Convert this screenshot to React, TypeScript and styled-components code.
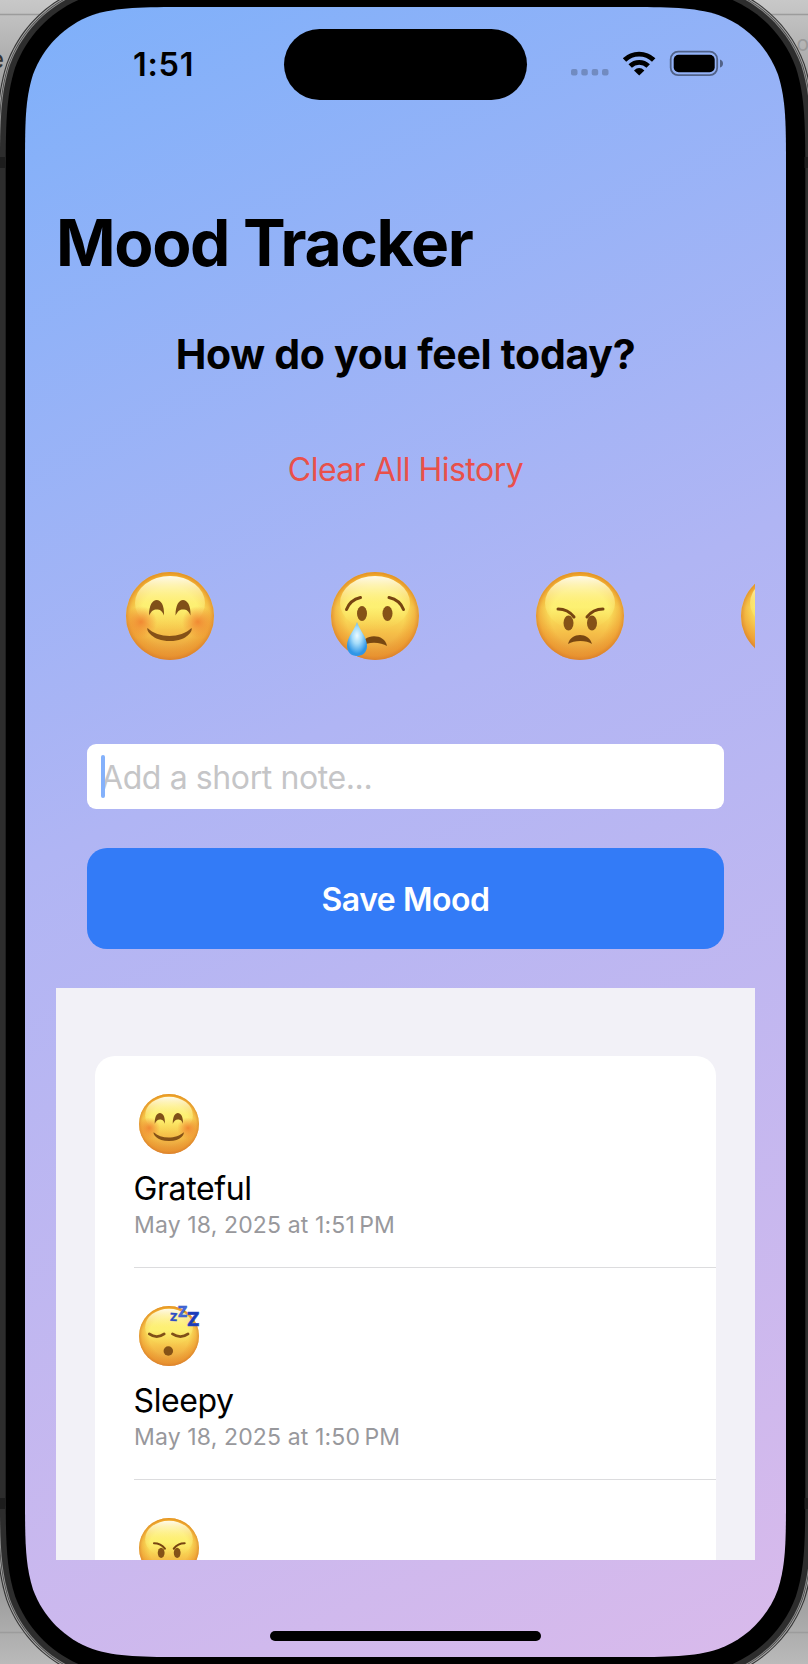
import React from "react";
import styled, { createGlobalStyle } from "styled-components";

const GlobalStyle = createGlobalStyle`
  * { box-sizing: border-box; }
  html, body { margin: 0; padding: 0; }
  body {
    width: 808px;
    height: 1664px;
    overflow: hidden;
    background: #b4b4b4;
    font-family: Inter, "Liberation Sans", sans-serif;
    color: #000;
  }
  button, input { font-family: inherit; border: 0; margin: 0; padding: 0; }
`;

/* Rounded rectangle with continuous corners. */
function squircle(x: number, y: number, w: number, h: number, r: number) {
  const R = x + w;
  const B = y + h;
  const a = 1.528665 * r;
  const b = 1.088493 * r;
  const c = 0.868407 * r;
  const d = 0.631494 * r;
  const e = 0.372824 * r;
  const f = 0.16906 * r;
  const g = 0.074911 * r;
  return [
    `M${x + a} ${y}`,
    `L${R - a} ${y}`,
    `C${R - b} ${y} ${R - c} ${y} ${R - d} ${y + g}`,
    `C${R - e} ${y + f} ${R - f} ${y + e} ${R - g} ${y + d}`,
    `C${R} ${y + c} ${R} ${y + b} ${R} ${y + a}`,
    `L${R} ${B - a}`,
    `C${R} ${B - b} ${R} ${B - c} ${R - g} ${B - d}`,
    `C${R - f} ${B - e} ${R - e} ${B - f} ${R - d} ${B - g}`,
    `C${R - c} ${B} ${R - b} ${B} ${R - a} ${B}`,
    `L${x + a} ${B}`,
    `C${x + b} ${B} ${x + c} ${B} ${x + d} ${B - g}`,
    `C${x + e} ${B - f} ${x + f} ${B - e} ${x + g} ${B - d}`,
    `C${x} ${B - c} ${x} ${B - b} ${x} ${B - a}`,
    `L${x} ${y + a}`,
    `C${x} ${y + b} ${x} ${y + c} ${x + g} ${y + d}`,
    `C${x + f} ${y + e} ${x + e} ${y + f} ${x + d} ${y + g}`,
    `C${x + c} ${y} ${x + b} ${y} ${x + a} ${y}Z`,
  ].join(" ");
}

const Stage = styled.div`
  position: relative;
  width: 808px;
  height: 1664px;
  overflow: hidden;
  padding: 7px 22px 7px 25px;
`;

const FrameArt = styled.svg`
  position: absolute;
  inset: 0;
`;

const Screen = styled.main`
  position: relative;
  width: 761px;
  height: 1650px;
  display: flex;
  flex-direction: column;
  background: linear-gradient(155.2deg, #7eb0fa 0%, #b0b5f4 43%, #d9baeb 100%);
  clip-path: path("${squircle(0, 0, 761, 1650, 107)}");
`;

const StatusBar = styled.header`
  display: flex;
  align-items: flex-start;
  height: 197px;
  padding: 21.5px 63px 0 108px;
`;

const Clock = styled.div`
  width: 151px;
  padding-top: 18px;
  font-size: 32.5px;
  line-height: 36px;
  font-weight: 600;
  letter-spacing: 0.7px;
`;

const Island = styled.div`
  width: 243px;
  height: 71.5px;
  border-radius: 36px;
  background: #000;
`;

const StatusIcons = styled.svg`
  margin: 20.5px 0 0 auto;
`;

const Content = styled.div`
  width: 699px;
  margin-left: 31px;
  display: flex;
  flex-direction: column;
`;

const Title = styled.h1`
  margin: 0;
  height: 78px;
  font-size: 64px;
  line-height: 77px;
  font-weight: 700;
  letter-spacing: -1.35px;
  white-space: nowrap;
`;

const Question = styled.h2`
  margin: 47px 0 0;
  text-align: center;
  font-size: 41px;
  line-height: 50px;
  font-weight: 700;
  letter-spacing: -0.3px;
  white-space: nowrap;
`;

const ClearButton = styled.button`
  align-self: center;
  margin-top: 71px;
  background: none;
  color: #e9504a;
  font-size: 32px;
  line-height: 40px;
  letter-spacing: -0.5px;
  white-space: nowrap;
`;

const MoodStrip = styled.div`
  display: flex;
  gap: 117px;
  margin-top: 82px;
  padding-left: 70px;
  height: 102px;
  overflow: hidden;
`;

const Face = styled.svg<{ $size: number }>`
  width: ${(p) => p.$size}px;
  height: ${(p) => p.$size}px;
  flex: none;
  display: block;
  overflow: visible;
`;

const NoteField = styled.label`
  position: relative;
  display: flex;
  align-items: center;
  margin: 70px 31px 0;
  height: 65px;
  padding: 2px 0 0 14px;
  border-radius: 9px;
  background: #fff;
`;

const NoteInput = styled.input`
  width: 600px;
  height: 50px;
  background: transparent;
  outline: 0;
  font-size: 32px;
  letter-spacing: -0.4px;
  &::placeholder { color: #c5c5c7; opacity: 1; }
`;

const Caret = styled.span`
  position: absolute;
  left: 13.5px;
  top: 11px;
  width: 4px;
  height: 43px;
  border-radius: 2px;
  background: #84b1fb;
`;

const SaveButton = styled.button`
  margin: 39px 31px 0;
  height: 101px;
  padding-top: 2px;
  border-radius: 20px;
  background: #337bf7;
  color: #fff;
  font-size: 32px;
  font-weight: 600;
  letter-spacing: -0.45px;
`;

const History = styled.section`
  margin-top: 39px;
  height: 572px;
  padding: 68px 39px 0;
  background: #f2f1f7;
  overflow: hidden;
`;

const Card = styled.ul`
  margin: 0;
  padding: 0 0 0 39px;
  list-style: none;
  height: 700px;
  border-radius: 20px;
  background: #fff;
`;

const Entry = styled.li`
  display: flex;
  flex-direction: column;
  align-items: flex-start;
  height: 212px;
  padding-top: 38px;
  border-bottom: 1px solid #dcdcde;
  white-space: nowrap;
`;

const EntryFace = styled.div`
  height: 60px;
  margin-left: 5px;
`;

const Note = styled.div`
  margin: 14.5px 0 0 -0.5px;
  font-size: 32px;
  line-height: 40px;
  letter-spacing: -0.4px;
`;

const Stamp = styled.time`
  margin-top: 2.5px;
  color: #98989c;
  font-size: 23px;
  line-height: 28px;
  letter-spacing: 0.14px;
`;

const HomeBar = styled.div`
  width: 271px;
  height: 10px;
  margin: 71px 0 0 245px;
  border-radius: 5px;
  background: #000;
`;

type Mood = "happy" | "sad" | "angry" | "sleepy" | "calm";

function MoodFace({ mood, size }: { mood: Mood; size: number }) {
  return (
    <Face $size={size} viewBox="0 0 88 88" role="img" aria-label={mood}>
      <circle cx="44" cy="44" r="44" fill="url(#faceBase)" />
      <circle cx="44" cy="44" r="44" fill="url(#faceRim)" />
      <ellipse cx="44" cy="31" rx="35" ry="27" fill="url(#faceShine)" />
      {mood === "happy" && (
        <>
          <circle cx="15" cy="50" r="16" fill="url(#blush)" />
          <circle cx="72" cy="50" r="16" fill="url(#blush)" />
          <path d="M23 43.500C23 33 26.500 28 30.700 28S38.500 33 38 43.500C36 38.500 34 37.500 30.700 37.500S25.500 39 23 43.500Z" fill="#805018" />
          <path d="M49.500 43.500C49.500 33 53 28 57 28S65 33 64.500 43.500C62.500 38.500 60.500 37.500 57 37.500S52 39 49.500 43.500Z" fill="#805018" />
          <path d="M21.500 56C32 66.500 55 66.500 65.500 56C67 58 62 69 44 69S20 58 21.500 56Z" fill="#855117" />
        </>
      )}
      {mood === "sad" && (
        <>
          <ellipse cx="31" cy="41.500" rx="5" ry="7.500" fill="#855217" />
          <ellipse cx="56.500" cy="41.500" rx="5" ry="7.500" fill="#855217" />
          <path d="M15.500 37.500Q19 28 29.500 25.500M58 25.500Q69 28 72.500 37.500" fill="none" stroke="#774411" strokeWidth="3" strokeLinecap="round" />
          <path d="M30 75C31 61 54 61 56 74C50 70 36 69 30 75Z" fill="#784711" />
          <path d="M26 50C29 59 36 65 36 74C36 80 32 84 26 84S16 80 16 74C16 65 23 59 26 50Z" fill="url(#tear)" />
        </>
      )}
      {mood === "angry" && (
        <>
          <ellipse cx="32.500" cy="51" rx="5" ry="7.500" fill="#855217" />
          <ellipse cx="56" cy="51" rx="5" ry="7.500" fill="#855217" />
          <path d="M22 37Q32 37 38 45M67 37Q57 37 51 45" fill="none" stroke="#774411" strokeWidth="3" strokeLinecap="round" />
          <path d="M32 72C35 60 53 60 56 72C51 68 38 68 32 72Z" fill="#784711" />
        </>
      )}
      {mood === "calm" && (
        <>
          <ellipse cx="31" cy="37" rx="5" ry="7.500" fill="#855217" />
          <ellipse cx="57" cy="37" rx="5" ry="7.500" fill="#855217" />
          <path d="M28 62H60" stroke="#784711" strokeWidth="4" strokeLinecap="round" />
        </>
      )}
      {mood === "sleepy" && (
        <>
          <path d="M15 41Q26 49 37 41M49 41Q61 49 72 41" fill="none" stroke="#805018" strokeWidth="4" strokeLinecap="round" />
          <circle cx="43" cy="66" r="7" fill="#855217" />
          <g fill="#2b4cc4" fontFamily="Inter, sans-serif" fontWeight="800" stroke="#2b4cc4" strokeWidth="0.600">
            <text x="45.500" y="22" fontSize="16" transform="rotate(3 50 16)">Z</text>
            <text x="57" y="16" fontSize="21" fill="#486bd8">Z</text>
            <text x="70" y="29" fontSize="28" fill="#1c3db8">Z</text>
          </g>
        </>
      )}
    </Face>
  );
}

function FaceDefs() {
  return (
    <defs>
      <linearGradient id="faceBase" x1="0" y1="0" x2="0" y2="1">
        <stop offset="0" stopColor="#fbcb25" />
        <stop offset="0.400" stopColor="#fced64" />
        <stop offset="0.700" stopColor="#f5be48" />
        <stop offset="1" stopColor="#e49438" />
      </linearGradient>
      <radialGradient id="faceRim" cx="0.500" cy="0.500" r="0.500">
        <stop offset="0.660" stopColor="#ea8c26" stopOpacity="0" />
        <stop offset="0.900" stopColor="#ea8c26" stopOpacity="0.480" />
        <stop offset="1" stopColor="#d87a28" stopOpacity="0.750" />
      </radialGradient>
      <linearGradient id="faceShine" x1="0" y1="0" x2="0" y2="1">
        <stop offset="0" stopColor="#fffff4" stopOpacity="0.950" />
        <stop offset="0.500" stopColor="#fff78c" stopOpacity="0.500" />
        <stop offset="1" stopColor="#fced64" stopOpacity="0" />
      </linearGradient>
      <radialGradient id="blush">
        <stop offset="0" stopColor="#f0812f" stopOpacity="0.900" />
        <stop offset="1" stopColor="#f0812f" stopOpacity="0" />
      </radialGradient>
      <radialGradient id="tear" cx="0.500" cy="0.400" r="0.600">
        <stop offset="0" stopColor="#eafaff" />
        <stop offset="0.400" stopColor="#a5dcfa" />
        <stop offset="0.900" stopColor="#2f96e6" />
      </radialGradient>
      <linearGradient id="wall" x1="0" y1="0" x2="0" y2="1">
        <stop offset="0" stopColor="#c8c8c8" />
        <stop offset="0.060" stopColor="#9c9c9c" />
        <stop offset="0.930" stopColor="#8a8a8a" />
        <stop offset="1" stopColor="#bababa" />
      </linearGradient>
    </defs>
  );
}

const layers = [
  { out: 28.9, fill: "#333" },
  { out: 27.8, fill: "#a2a2a2" },
  { out: 26.7, fill: "#3a3a3a" },
  { out: 26.1, fill: "#8d8d8d" },
  { out: 25.1, fill: "#2d2d2d" },
  { out: 19.3, fill: "#000" },
];

const entries: { mood: Mood; note?: string; stamp?: string }[] = [
  { mood: "happy", note: "Grateful", stamp: "May 18, 2025 at 1:51\u202fPM" },
  { mood: "sleepy", note: "Sleepy", stamp: "May 18, 2025 at 1:50\u202fPM" },
  { mood: "angry" },
];

export default function App() {
  return (
    <>
      <GlobalStyle />
      <Stage>
        <FrameArt width="808" height="1664" aria-hidden>
          <FaceDefs />
          <rect width="808" height="1664" fill="url(#wall)" />
          <path d="M0 14.500H808M0 1632.500H808" stroke="#9c9c9c" strokeWidth="1.500" />
          <text x="-10.500" y="67.500" fontSize="25" fontFamily="Inter, sans-serif" fill="#333">e</text>
          <text x="796.500" y="51" fontSize="21" fontFamily="Inter, sans-serif" fill="#9a9a9a">o</text>
          {layers.map((l) => (
            <path
              key={l.out}
              d={squircle(25 - l.out, 7 - l.out, 761 + 2 * l.out, 1650 + 2 * l.out, 107 + l.out)}
              fill={l.fill}
            />
          ))}
          <path d="M0 157h5v11H0zM804.500 157H808v11h-3.500zM0 1498h5v11H0zM804.500 1498H808v11h-3.500z" fill="#1d1d1d" />
        </FrameArt>
        <Screen>
          <StatusBar>
            <Clock>1:51</Clock>
            <Island />
            <StatusIcons width="153" height="28" viewBox="570 49 153 28">
              <g fill="#000" fillOpacity="0.220">
                <rect x="571" y="69" width="6.500" height="6.500" rx="2" />
                <rect x="581.300" y="69" width="6.500" height="6.500" rx="2" />
                <rect x="591.700" y="69" width="6.500" height="6.500" rx="2" />
                <rect x="602" y="69" width="6.500" height="6.500" rx="2" />
              </g>
              <path d="M624.500 60A21 21 0 0 1 653.700 60" fill="none" stroke="#000" strokeWidth="4.900" />
              <path d="M630.200 66A13 13 0 0 1 648.200 66" fill="none" stroke="#000" strokeWidth="4.900" />
              <path d="M639.200 75.500L634 70.400Q639.200 65.800 644.400 70.400Z" />
              <rect x="670.700" y="51.700" width="46.500" height="23.500" rx="7.500" fill="none" stroke="#000" strokeOpacity="0.450" strokeWidth="1.800" />
              <rect x="673.700" y="54.700" width="41" height="17.500" rx="5" />
              <path d="M720 59.500Q723 60.500 723 63.500T720 67.500Z" fillOpacity="0.450" />
            </StatusIcons>
          </StatusBar>
          <Content>
            <Title>Mood Tracker</Title>
            <Question>How do you feel today?</Question>
            <ClearButton>Clear All History</ClearButton>
            <MoodStrip>
              <MoodFace mood="happy" size={88} />
              <MoodFace mood="sad" size={88} />
              <MoodFace mood="angry" size={88} />
              <MoodFace mood="calm" size={88} />
            </MoodStrip>
            <NoteField>
              <NoteInput placeholder="Add a short note..." />
              <Caret />
            </NoteField>
            <SaveButton>Save Mood</SaveButton>
            <History>
              <Card>
                {entries.map((e) => (
                  <Entry key={e.mood}>
                    <EntryFace>
                      <MoodFace mood={e.mood} size={60} />
                    </EntryFace>
                    {e.note && <Note>{e.note}</Note>}
                    {e.stamp && <Stamp>{e.stamp}</Stamp>}
                  </Entry>
                ))}
              </Card>
            </History>
          </Content>
          <HomeBar />
        </Screen>
      </Stage>
    </>
  );
}
